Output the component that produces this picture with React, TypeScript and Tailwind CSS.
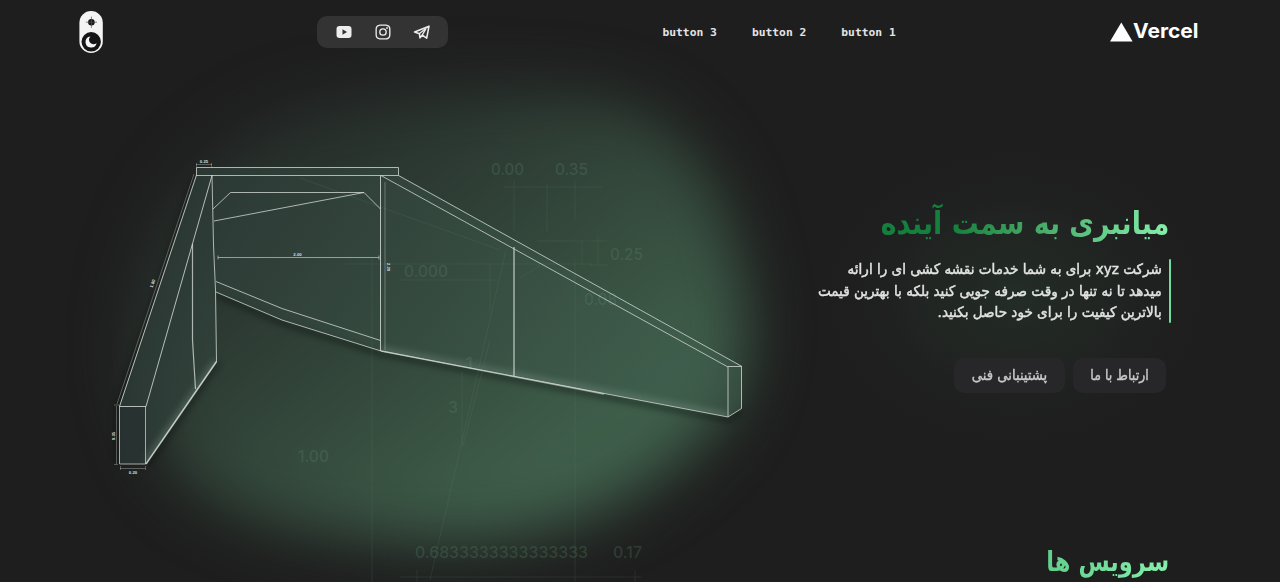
import React from "react";
import { BiLogoInstagram } from "react-icons/bi";

function ThemeSwitch() {
  return (
    <button aria-label="theme" className="h-[42px] w-6">
      <svg viewBox="0 0 24 42" className="h-[42px] w-6">
        <rect x=".4" y="0" width="23.4" height="42" rx="11.7" fill="#f4f4f5" />
        <circle cx="12.4" cy="11.2" r="3.3" fill="#151515" />
        <path d="M12.4 5.6v11.200M6.800 11.200h11.200" stroke="#555" strokeWidth=".7" />
        <circle cx="12.2" cy="30.800" r="9.700" fill="#151517" />
        <path d="M11.400 25.400a5.600 5.600 0 1 0 6.200 6.600 4.200 4.200 0 0 1-6.200-6.600z" fill="#f4f4f5" />
      </svg>
    </button>
  );
}

function Socials() {
  return (
    <div className="flex h-8 w-[131px] items-center justify-center gap-[19px] rounded-[10px] bg-[#333333] text-[#ededed]">
      <svg viewBox="0 0 20 20" className="size-5">
        <rect x="2.500" y="4" width="15" height="12" rx="3" fill="currentColor" />
        <path d="M8.500 7.300v5.400l4.500-2.700z" fill="#333" />
      </svg>
      <BiLogoInstagram className="size-5" />
      <svg viewBox="0 0 20 20" className="size-5" fill="none" stroke="currentColor" strokeLinejoin="round" strokeWidth="1.600">
        <path d="M2.600 10L17 4.200l-2.300 12-4.500-3-2.200 2.600-.6-4.100z" />
        <path d="M7.400 11.600l6.600-5-3.800 6.500" strokeWidth="1.300" />
      </svg>
    </div>
  );
}

function Header() {
  return (
    <header className="relative flex h-16 items-center justify-between pl-[79px] pr-[82px]">
      <ThemeSwitch />
      <Socials />
      <nav className="flex gap-[35px] pt-[2px] font-['DejaVu_Sans_Mono',monospace] text-[11.300px] font-bold text-[#e4e4e4]">
        <a>button 3</a>
        <a>button 2</a>
        <a>button 1</a>
      </nav>
      <svg viewBox="0 0 88 24" className="h-6 w-[88px]">
        <path d="M11.300 2.500L22.600 21.600H0z" fill="#fff" />
        <text x="23" y="18" fill="#fff" fontFamily="Inter, sans-serif" fontSize="19.500" fontWeight="700" textLength="65.500" lengthAdjust="spacingAndGlyphs">Vercel</text>
      </svg>
    </header>
  );
}

const ghostLabels: [number, number, string, number][] = [
  [491, 175, "0.00", 33],
  [555, 175, "0.35", 33],
  [610, 260, "0.25", 33],
  [404, 277, "0.000", 44],
  [584, 305, "0.08", 33],
  [298, 462, "1.00", 31],
  [448, 413, "3", 10],
  [465, 369, "1", 8],
  [415, 558, "0.6833333333333333", 173],
  [613, 558, "0.17", 29],
];

const tinyLabels: [number, number, number, string][] = [
  [204, 163, 0, "0.25"],
  [297.5, 256, 0, "2.00"],
  [387, 267, 90, "2.20"],
  [154, 284, -70, "1.80"],
  [114.5, 436, -90, "0.35"],
  [133, 474, 0, "0.20"],
];

function Backdrop() {
  return (
    <svg viewBox="0 0 1280 582" className="absolute left-0 top-0 h-[582px] w-[1280px]" aria-hidden="true">
      <defs>
        <linearGradient id="glow" gradientUnits="userSpaceOnUse" x1="270" y1="90" x2="560" y2="470">
          <stop offset="0" stopColor="#252b28" />
          <stop offset=".3" stopColor="#2b3731" />
          <stop offset=".65" stopColor="#354b3d" />
          <stop offset="1" stopColor="#3f5f4b" />
        </linearGradient>
        <radialGradient id="halo">
          <stop offset="0" stopColor="#232d27" />
          <stop offset=".5" stopColor="#212623" stopOpacity=".75" />
          <stop offset="1" stopColor="#1e1e1e" stopOpacity="0" />
        </radialGradient>
        <linearGradient id="glass" gradientUnits="userSpaceOnUse" x1="150" y1="200" x2="700" y2="400">
          <stop offset="0" stopColor="#2d3b37" stopOpacity=".75" />
          <stop offset="1" stopColor="#41604f" stopOpacity=".5" />
        </linearGradient>
        <filter id="soft" x="-20%" y="-20%" width="140%" height="140%" colorInterpolationFilters="sRGB">
          <feGaussianBlur stdDeviation="30" />
        </filter>
        <filter id="shadow" x="-10%" y="-10%" width="120%" height="120%" colorInterpolationFilters="sRGB">
          <feGaussianBlur stdDeviation="3" />
        </filter>
        <clipPath id="panes">
          <path d="M119 406L196 175V167H399V175L742 366V409L728 417L381 351L282 320L216 292L217 362L146 464H119z" />
        </clipPath>
      </defs>

      <ellipse cx="1015" cy="296" rx="200" ry="155" fill="url(#halo)" />
      <path
        filter="url(#soft)"
        fill="url(#glow)"
        d="M270 120C350 90 480 80 590 95C680 110 720 180 738 260C756 340 750 400 690 452C620 515 540 545 430 543C330 538 235 525 185 480C135 430 120 340 155 240C175 190 220 145 270 120z"
      />

      <g filter="url(#shadow)" fill="none" stroke="#0c120f" strokeOpacity=".65" strokeWidth="4">
        <path d="M194 178L117 408V464M148 466L218 363M216 295L282 323L381 354L728 420L742 411" />
      </g>
      <g fill="url(#glass)">
        <path d="M119 406L196 175V167H399V175L742 366V409L728 417L381 351L282 320L216 292L217 362L146 464H119z" />
      </g>
      <g clipPath="url(#panes)">
        <path d="M146 464L217 362M381 351L728 417" stroke="#a4bfb0" strokeOpacity=".25" strokeWidth="9" filter="url(#shadow)" />
        <path d="M119 406H146V464H119z" fill="#272f31" fillOpacity=".6" />
      </g>

      <g stroke="#5f8871" strokeOpacity=".17" fill="none">
        <path d="M504 187H602M514 180V232M547 184V232M575 180V220M537 241H607M582 241V265M598 236V265M590 265H608M345 264H592M400 280H497M372 258V582M490 264V310M575 258V582M462 372V446M400 577H641M417 570V582M635 570V582M506 250L430 580M490 340L463 446M300 178L500 250M520 278L540 265" />
      </g>
      <g fontFamily="Inter, sans-serif" fontSize="16" fontWeight="500" fill="#5f8c72" fillOpacity=".27">
        {ghostLabels.map(([x, y, t, w]) => (
          <text key={t} x={x} y={y} textLength={w} lengthAdjust="spacingAndGlyphs">{t}</text>
        ))}
      </g>

      <g fill="none" stroke="#d9dfdb" strokeWidth="1">
        <path d="M196.500 167.500H398.500V175.500H196.500z" strokeOpacity=".75" />
        <path d="M196.500 175L119.500 406.500H146L212 175.500" strokeOpacity=".8" />
        <path d="M119.500 406V464H145.500V406" strokeOpacity=".7" />
        <path d="M212 175L213.500 245L215.500 290L216.500 362" strokeOpacity=".75" />
        <path d="M192.500 244V340L195.500 389" strokeWidth="1.200" strokeOpacity=".75" />
        <path d="M213 209L230.500 192.500H364L380.500 209M214 221L364 192.500" strokeOpacity=".75" />
        <path d="M218 257.500H379M218 255.500V259.500M379 255.500V259.500" strokeOpacity=".6" />
        <path d="M216 281.500L282 308.500L380.500 340.500M216 292L282 320L381 351" strokeOpacity=".75" />
        <path d="M380.500 175.500V351" strokeOpacity=".8" />
        <path d="M385 182V350" strokeOpacity=".35" />
        <path d="M381 175.500L728 367M398.500 175.500L742 366.500" strokeOpacity=".75" />
        <path d="M514 247V376" strokeWidth="1.600" strokeOpacity=".65" />
        <path d="M381 351L728 417L741.500 408.500V366.500H728V417" strokeOpacity=".75" />
        <path d="M381 351L604 394" strokeOpacity=".6" strokeWidth="1.400" />
        <path d="M146 464L216.500 361.500" strokeWidth="1.500" strokeOpacity=".85" />
      </g>
      <g fill="none" stroke="#cfd5d1" strokeOpacity=".35">
        <path d="M196 164.500H212M196.500 163V167M211.500 163V167M194 174L117 404M116.500 406V464M114 464.500H118M114 405H119M120 468.500H145M120.500 466V470M145.500 466V470" />
      </g>
      <g fontFamily="Liberation Sans, sans-serif" fontSize="4.300" fontWeight="700" fill="#d8dcd9" textAnchor="middle">
        {tinyLabels.map(([x, y, r, t]) => (
          <text key={t + x} transform={`translate(${x} ${y}) rotate(${r})`}>{t}</text>
        ))}
      </g>
    </svg>
  );
}

export default function App() {
  return (
    <div className="relative h-[582px] w-full overflow-hidden bg-[#1e1e1e] font-['DejaVu_Sans','Noto_Sans',sans-serif]">
      <Backdrop />
      <Header />
      <main dir="rtl" className="relative flex flex-col items-start pr-[111px] pt-[134px]">
        <h1 className="flex h-[50px] origin-right scale-x-[0.838] items-center whitespace-nowrap bg-gradient-to-l from-[#86efac] to-[#15803d] to-75% bg-clip-text text-[32px] font-bold text-transparent">
          میانبری به سمت آینده
        </h1>
        <div className="-mr-[2px] mt-[11px] flex h-16 gap-[7px]">
          <span className="w-[2px] rounded bg-[#6fdc9b]" />
          <p className="origin-right whitespace-nowrap text-[14.500px] leading-[21.500px] text-[#e2e4e3] scale-x-[0.935] [-webkit-text-stroke:0.45px_#e2e4e3]">
            شرکت xyz برای به شما خدمات نقشه کشی ای را ارائه
            <br />
            میدهد تا نه تنها در وقت صرفه جویی کنید بلکه با بهترین قیمت
            <br />
            بالاترین کیفیت را برای خود حاصل بکنید.
          </p>
        </div>
        <div className="mr-[3px] mt-[35px] flex gap-2 whitespace-nowrap text-[14.500px] text-[#c9c9cc] [-webkit-text-stroke:0.4px_#c9c9cc]">
          <button className="flex h-[35px] w-[93px] items-center justify-center rounded-[10px] bg-[#27272a]">
            <span className="scale-x-[0.87]">ارتباط با ما</span>
          </button>
          <button className="flex h-[35px] w-[111px] items-center justify-center rounded-[10px] bg-[#27272a]">
            <span className="scale-x-[0.91]">پشتینبانی فنی</span>
          </button>
        </div>
        <h2 className="mt-[147px] flex h-[44px] origin-right scale-x-[0.807] items-center whitespace-nowrap bg-gradient-to-l from-[#86efac] to-[#62cf8c] bg-clip-text text-[28px] font-bold text-transparent">
          سرویس ها
        </h2>
      </main>
    </div>
  );
}
